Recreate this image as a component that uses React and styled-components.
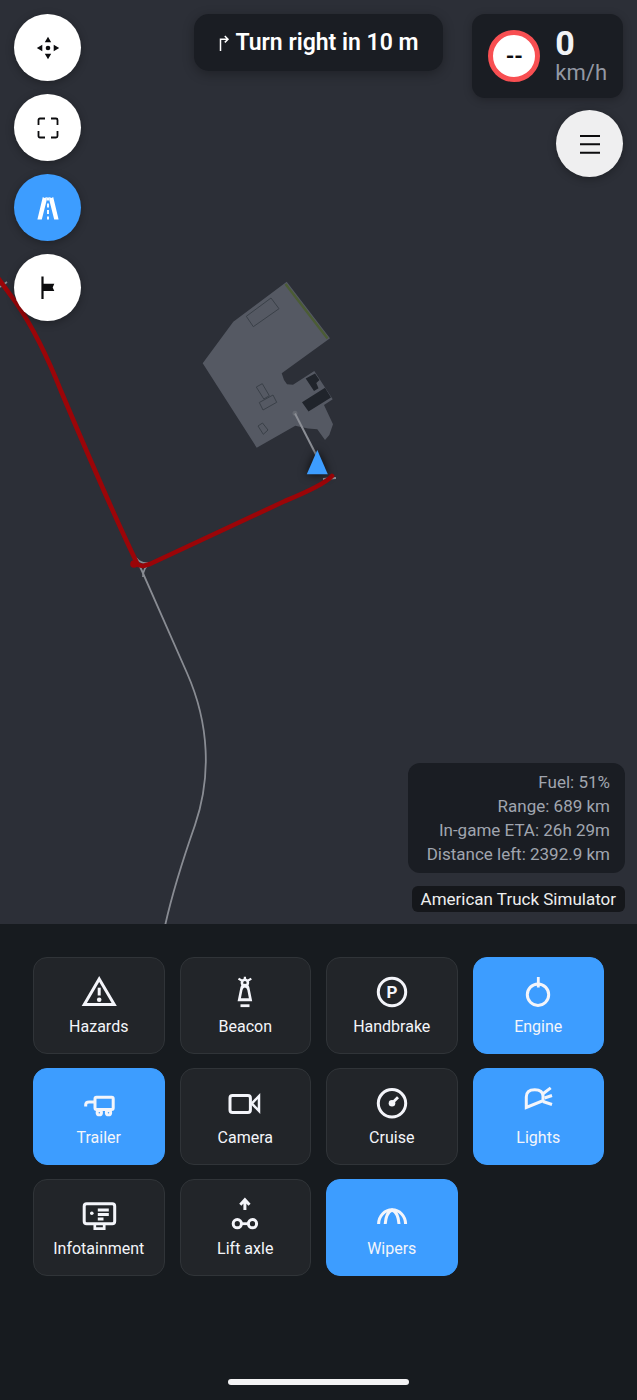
import React, { useState } from 'react';
import styled, { createGlobalStyle } from 'styled-components';

const GlobalStyle = createGlobalStyle`
	* {
		box-sizing: border-box;
	}
	body {
		margin: 0;
		background: #171b1f;
		font-family: Roboto, "Liberation Sans", sans-serif;
	}
	button {
		font-family: inherit;
		cursor: pointer;
	}
`;

const IconLetter = styled.text`
	fill: currentColor;
	stroke: none;
	font-size: 17px;
	font-weight: 700;
	text-anchor: middle;
`;

const MoveIcon = () => (
	<MapIcon viewBox="0 0 24 24">
		<path d="M12 .8 15.200 6.300H8.800zM12 23.200 8.800 17.700h6.400zM.8 12l5.500-3.200v6.400zM23.200 12l-5.500 3.200V8.800z" />
		<circle cx="12" cy="12" r="2.3" />
	</MapIcon>
);

const FullscreenIcon = () => (
	<MapIcon viewBox="0 0 24 24">
		<path
			d="M2.500 9V4q0-1.500 1.500-1.500h5M15 2.500h5q1.500 0 1.500 1.500v5M21.500 15v5q0 1.500-1.500 1.500h-5M9 21.500H4q-1.500 0-1.500-1.500v-5"
			fill="none"
			stroke="currentColor"
			strokeWidth="1.8"
		/>
	</MapIcon>
);

const RoadIcon = () => (
	<MapIcon viewBox="0 0 24 24">
		<path d="M6.800 1 8.500 2 10.800 1v2.800L5.800 23.500H1.400zM17.200 1 15.500 2 13.200 1v2.800l5 19.700h4.400z" />
		<path d="M12 1.500v3M12 7.500v4M12 14v4M12 20.500v3" stroke="currentColor" strokeWidth="1.9" />
	</MapIcon>
);

const FlagIcon = () => (
	<MapIcon viewBox="0 0 24 24">
		<path d="M5.400.5h2.200v7.200h10.700l-1.600 3.700 1.600 3.700H7.600v7.800H5.400z" />
	</MapIcon>
);

const MenuIcon = () => (
	<MapIcon viewBox="0 0 24 24">
		<path d="M2 4h20M2 12.300h20M2 20.700h20" stroke="currentColor" strokeWidth="2.1" />
	</MapIcon>
);

const TurnRightIcon = () => (
	<TurnIcon viewBox="0 0 12 18" aria-hidden="true">
		<path d="M2.500 17V5.200h7M6.800 2l3.200 3.200L6.800 8.400" />
	</TurnIcon>
);

const mapButtons = [
	{ name: 'Move map', Icon: MoveIcon },
	{ name: 'Fullscreen', Icon: FullscreenIcon },
	{ name: 'Show road', Icon: RoadIcon, active: true },
	{ name: 'Waypoint', Icon: FlagIcon },
];

const controls = [
	{
		label: 'Hazards',
		icon: (
			<>
				<path d="M18.200 5 33.200 30.500H3.300z" />
				<path d="M18.200 13.700v7.800" />
				<circle cx="18.2" cy="25.7" r="2.3" fill="currentColor" stroke="none" />
			</>
		),
	},
	{
		label: 'Beacon',
		icon: (
			<>
				<path
					d="M10.600 27.200 13.400 13.500Q14.300 9.800 17.900 9.800t4.500 3.700l2.800 13.700zM13.900 24.300h8L20.300 16q-.6-2.600-2.400-2.600T15.500 16z"
					fill="currentColor"
					fillRule="evenodd"
					stroke="none"
				/>
				<circle cx="17.9" cy="8.7" r="3" strokeWidth="2.6" />
				<path d="M17.900 2.700v3M11.500 4.600l3.500 2.200M24.300 4.600l-3.500 2.200" strokeWidth="2.2" />
				<path d="M13.500 31.700h9" strokeWidth="2.8" />
			</>
		),
	},
	{
		label: 'Handbrake',
		icon: (
			<>
				<circle cx="18" cy="18" r="13.7" />
				<IconLetter x="18" y="24">P</IconLetter>
			</>
		),
	},
	{
		label: 'Engine',
		on: true,
		icon: (
			<>
				<circle cx="18" cy="20.7" r="10.7" />
				<path d="M18.300 3v10.500" strokeWidth="2.8" />
			</>
		),
	},
	{
		label: 'Trailer',
		on: true,
		icon: (
			<>
				<rect x="14" y="12.3" width="18.2" height="12.2" rx="1.5" />
				<path d="M4.700 21.500v-1.700q0-2.800 3.500-2.800H14" />
				<circle cx="18.3" cy="27.7" r="2.2" strokeWidth="2.9" />
				<circle cx="27.5" cy="27.7" r="2.2" strokeWidth="2.9" />
			</>
		),
	},
	{
		label: 'Camera',
		icon: (
			<>
				<rect x="3" y="10.5" width="20.4" height="17" rx="2.5" />
				<path d="M32 11v15l-7.200-7.500z" strokeWidth="2.5" />
			</>
		),
	},
	{
		label: 'Cruise',
		icon: (
			<>
				<circle cx="18" cy="18.3" r="13.7" />
				<circle cx="18" cy="18.3" r="3.3" fill="currentColor" stroke="none" />
				<path d="m18 18.300 6-6" strokeWidth="2.8" />
			</>
		),
	},
	{
		label: 'Lights',
		on: true,
		icon: (
			<>
				<path d="M6.300 22.500V12q0-7.300 8.500-7.300 8 0 8.200 6.300v4.700z" />
				<path d="m23 8.700 7.700-5.800M24.500 13l7.500-2.500M23 16.500l9 3" />
			</>
		),
	},
	{
		label: 'Infotainment',
		icon: (
			<>
				<rect x="3.2" y="7.7" width="30.5" height="20" rx="2.5" />
				<path d="M13.800 28v4.700h9.400V28" strokeWidth="2.7" />
				<circle cx="10.8" cy="17.3" r="1.8" fill="currentColor" stroke="none" />
				<path d="M16.800 14h11M16.800 18.500h11M16.800 23h5.700" strokeWidth="2.8" />
			</>
		),
	},
	{
		label: 'Lift axle',
		icon: (
			<>
				<path d="M17.900 14V4M13.300 8.700l4.600-4.900 4.600 4.900" />
				<circle cx="10.3" cy="27.7" r="4.1" />
				<circle cx="25.5" cy="27.7" r="4.1" />
				<path d="M14.500 27.700h7" strokeWidth="2.8" />
			</>
		),
	},
	{
		label: 'Wipers',
		on: true,
		icon: (
			<>
				<path d="M4.600 28A13.500 14.200 0 0 1 31.600 28" />
				<path d="M11.200 28q.8-11.500 6.900-14 6.100 2.500 6.900 14" />
			</>
		),
	},
];

const tripInfo = ['Fuel: 51%', 'Range: 689 km', 'In-game ETA: 26h 29m', 'Distance left: 2392.9 km'];

const RouteMap = () => (
	<MapCanvas viewBox="0 0 637 924" preserveAspectRatio="xMidYMid slice" aria-hidden="true">
		<path
			d="M286.700 281.700 330 338.300 281.700 373.300 284 380 287 384.300 293 384.700 314.300 371 332.700 399.300 324 405 333 424.300 329.300 435 325 440 317.300 429.300 308 428.500 295.300 425.700 256.700 447.700 202.700 363.300 233.300 321.700z"
			fill="#555963"
		/>
		<path d="M285.500 284 327.500 338.500" stroke="#4b5c35" strokeWidth="2.4" />
		<g fill="none" stroke="#3a4048" strokeWidth="1">
			<path d="M246.300 316.300 271 298l8 10.700-25.700 18z" />
			<path d="m256.300 387 6-3.300 7 12-5.500 3.300zM259.300 402.500l13.700-7.500 3.700 7.300-13.700 7.700zM258 426l4.500-3 5.500 7-4.700 4.300z" />
		</g>
		<path d="m305.700 378.500 9.300-5 4.500 6.500-3.200 3 2.200 5.300-4.500 2.700zM302 402.300l23-14.500 6 9.700-22.500 14z" fill="#20242b" />
		<circle cx="295" cy="413.3" r="2.5" fill="#666a72" />
		<path d="m295 413.500 22 43" fill="none" stroke="#8b8e95" strokeWidth="2" />
		<g fill="none" stroke="#898c93" strokeWidth="1.8">
			<path d="M136 558 142 571 187 673C210 725 211 778 195 825Q174 885 165 926" />
			<path d="M136 558q5 6 12 5M150 564q-7 3-7 13M0 287l7-5M323 479l13-1" />
		</g>
		<path
			d="M-2 278 17 304Q40 338 61 391C83 443 115 518 137 563L134 564 143 566 150 564 285 501Q324 485 332 476"
			fill="none"
			stroke="#9b0508"
			strokeWidth="4.6"
			strokeLinejoin="round"
			strokeLinecap="round"
		/>
		<circle cx="134" cy="564" r="3.8" fill="#9b0508" />
		<TruckMarker d="m317.300 450 10.500 24.300h-21z" />
	</MapCanvas>
);

const App = () => {
	const [active, setActive] = useState(controls.filter(c => c.on).map(c => c.label));

	const toggle = label => {
		setActive(active.includes(label) ? active.filter(l => l !== label) : [...active, label]);
	};

	return (
		<Page>
			<GlobalStyle />
			<MapSection>
				<RouteMap />
				<TopRow>
					<ButtonColumn>
						{mapButtons.map(({ name, Icon, active: isOn }) => (
							<RoundButton key={name} type="button" aria-label={name} $active={isOn}>
								<Icon />
							</RoundButton>
						))}
					</ButtonColumn>
					<Banner>
						<TurnRightIcon />
						Turn right in 10 m
					</Banner>
					<RightColumn>
						<SpeedCard>
							<SpeedLimit>--</SpeedLimit>
							<SpeedText>
								<Speed>0</Speed>
								<Unit>km/h</Unit>
							</SpeedText>
						</SpeedCard>
						<RoundButton type="button" aria-label="Menu" $muted>
							<MenuIcon />
						</RoundButton>
					</RightColumn>
				</TopRow>
				<BottomColumn>
					<TripCard>
						{tripInfo.map(line => (
							<TripLine key={line}>{line}</TripLine>
						))}
					</TripCard>
					<GameTag>American Truck Simulator</GameTag>
				</BottomColumn>
			</MapSection>
			<Panel>
				<ControlGrid>
					{controls.map(({ label, icon }) => (
						<ControlButton
							key={label}
							type="button"
							aria-pressed={active.includes(label)}
							$active={active.includes(label)}
							onClick={() => toggle(label)}
						>
							<ControlIcon viewBox="0 0 36 36" aria-hidden="true">
								{icon}
							</ControlIcon>
							<ControlLabel>{label}</ControlLabel>
						</ControlButton>
					))}
				</ControlGrid>
				<HomeBar />
			</Panel>
		</Page>
	);
};

export default App;

const Page = styled.div`
	min-height: 100vh;
	display: flex;
	flex-direction: column;
	color: #f4f5f8;
`;

const MapSection = styled.main`
	position: relative;
	flex: 1;
	display: flex;
	flex-direction: column;
	justify-content: space-between;
	gap: 40px;
	padding: 14px 12px 12px 14px;
	background: #2c2f37;
	overflow: hidden;
`;

const MapCanvas = styled.svg`
	position: absolute;
	inset: 0;
	width: 100%;
	height: 100%;
`;

const TruckMarker = styled.path`
	fill: #3d9dff;
	filter: drop-shadow(0 0 5px rgba(0, 0, 0, 0.8));
`;

const TopRow = styled.div`
	position: relative;
	display: grid;
	grid-template-columns: 1fr auto 1fr;
	align-items: start;
	padding-right: 2px;
`;

const ButtonColumn = styled.nav`
	display: flex;
	flex-direction: column;
	gap: 13px;
`;

const RightColumn = styled.div`
	display: flex;
	flex-direction: column;
	align-items: flex-end;
	gap: 12px;
`;

const RoundButton = styled.button`
	display: flex;
	align-items: center;
	justify-content: center;
	width: 67px;
	height: 67px;
	padding: 0;
	border: none;
	border-radius: 50%;
	background: ${({ $active, $muted }) => ($active ? '#3d9dff' : $muted ? '#efeff0' : '#ffffff')};
	color: ${({ $active }) => ($active ? '#ffffff' : '#0c0c0e')};
	box-shadow: 0 2px 8px rgba(0, 0, 0, 0.3);
`;

const MapIcon = styled.svg`
	width: 24px;
	height: 24px;
	fill: currentColor;
`;

const TurnIcon = styled.svg`
	width: 12px;
	height: 18px;
	fill: none;
	stroke: #ffffff;
	stroke-width: 1.5;
`;

const Banner = styled.div`
	display: flex;
	align-items: center;
	gap: 5px;
	padding: 15px 24px 14px;
	border-radius: 15px;
	background: #1a1d23;
	color: #ffffff;
	font-size: 23px;
	line-height: 28px;
	font-weight: 600;
	white-space: nowrap;
	box-shadow: 0 3px 12px rgba(0, 0, 0, 0.3);
`;

const SpeedCard = styled.div`
	display: flex;
	align-items: center;
	gap: 15px;
	height: 84px;
	padding: 0 16px;
	border-radius: 13px;
	background: #1a1d23;
	box-shadow: 0 2px 8px rgba(0, 0, 0, 0.25);
`;

const SpeedLimit = styled.div`
	display: flex;
	align-items: center;
	justify-content: center;
	width: 52px;
	height: 52px;
	border: 5px solid #f84f52;
	border-radius: 50%;
	background: #ffffff;
	color: #0c0c0e;
	font-size: 22px;
	font-weight: 700;
`;

const SpeedText = styled.div`
	display: flex;
	flex-direction: column;
`;

const Speed = styled.strong`
	font-size: 34px;
	line-height: 34px;
	font-weight: 700;
	color: #f1f2f5;
`;

const Unit = styled.span`
	font-size: 22px;
	line-height: 26px;
	color: #9398a3;
`;

const BottomColumn = styled.div`
	position: relative;
	display: flex;
	flex-direction: column;
	align-items: flex-end;
	gap: 13px;
`;

const TripCard = styled.div`
	padding: 7px 15px 7px 19px;
	border-radius: 12px;
	background: #1a1d23;
	text-align: right;
`;

const TripLine = styled.div`
	font-size: 17px;
	line-height: 24px;
	color: #a0a5af;
`;

const GameTag = styled.div`
	padding: 0 9px;
	border-radius: 6px;
	background: #15171b;
	font-size: 17px;
	line-height: 26px;
	color: #eeeeee;
`;

const Panel = styled.section`
	display: flex;
	flex-direction: column;
	align-items: center;
	gap: 103px;
	padding: 33px 33px 15px;
	background: #171b1f;
`;

const ControlGrid = styled.div`
	width: 100%;
	display: grid;
	grid-template-columns: repeat(4, 1fr);
	gap: 14px 15px;
`;

const ControlButton = styled.button`
	display: flex;
	flex-direction: column;
	align-items: center;
	justify-content: center;
	gap: 7px;
	height: 97px;
	padding: 0;
	border: 1px solid ${({ $active }) => ($active ? '#3d9dff' : '#303438')};
	border-radius: 14px;
	background: ${({ $active }) => ($active ? '#3d9dff' : '#222529')};
	color: #f4f5fa;
`;

const ControlIcon = styled.svg`
	width: 36px;
	height: 36px;
	fill: none;
	stroke: currentColor;
	stroke-width: 3;
`;

const ControlLabel = styled.span`
	font-size: 16px;
	line-height: 20px;
`;

const HomeBar = styled.div`
	width: 181px;
	height: 6px;
	border-radius: 3px;
	background: #f3f3f4;
`;
